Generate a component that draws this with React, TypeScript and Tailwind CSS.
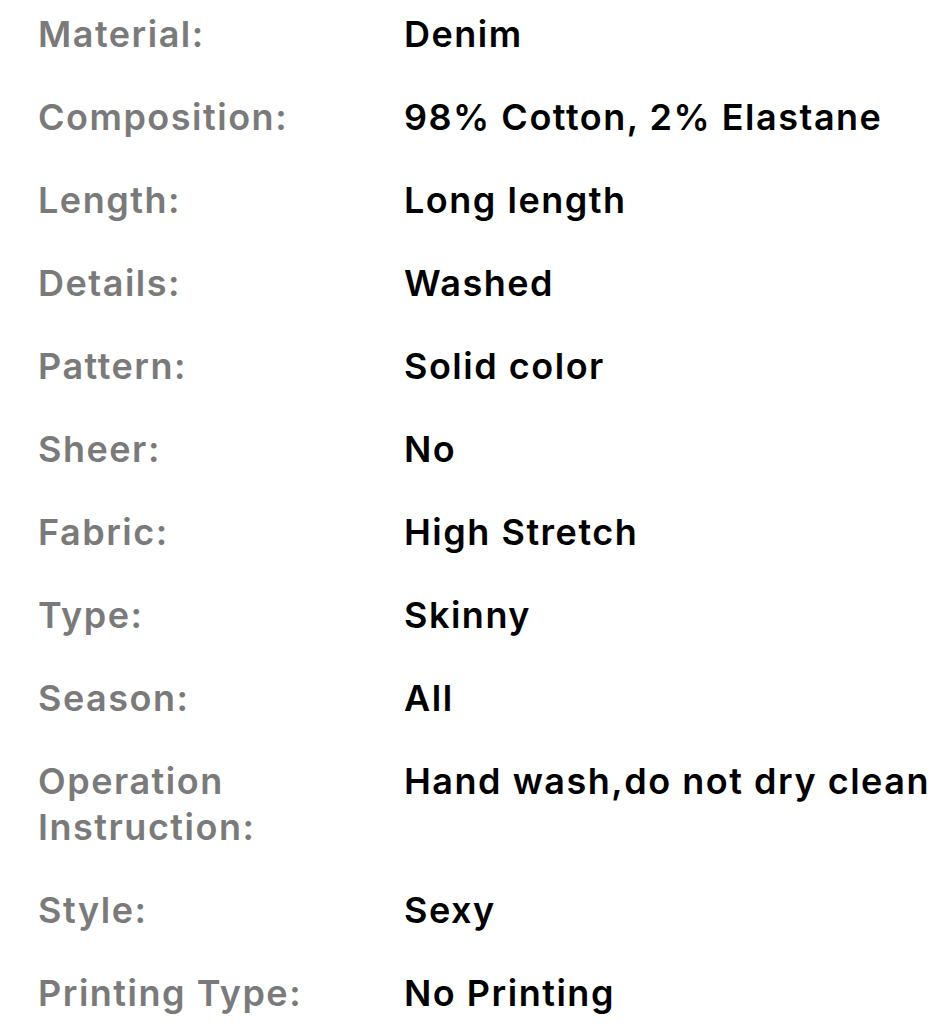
const specs = [
    ['Material:', 'Denim'],
    ['Composition:', '98% Cotton, 2% Elastane'],
    ['Length:', 'Long length'],
    ['Details:', 'Washed'],
    ['Pattern:', 'Solid color'],
    ['Sheer:', 'No'],
    ['Fabric:', 'High Stretch'],
    ['Type:', 'Skinny'],
    ['Season:', 'All'],
    ['Operation Instruction:', 'Hand wash,do not dry clean'],
    ['Style:', 'Sexy'],
    ['Printing Type:', 'No Printing'],
]

export default function App() {
    return (
        <div className="min-h-[1035px] bg-white pl-[38px] pt-[11px] font-['Inter',sans-serif] text-[36px] leading-[46px] font-semibold tracking-[0.042em]">
            <div className="flex flex-col gap-[37px]">
                {specs.map(([label, value]) => (
                    <div key={label} className="grid grid-cols-[366px_1fr]">
                        <div className="text-[#7a7a7a] pr-[16px]">{label}</div>
                        <div className="text-black whitespace-nowrap">{value}</div>
                    </div>
                ))}
            </div>
        </div>
    )
}
